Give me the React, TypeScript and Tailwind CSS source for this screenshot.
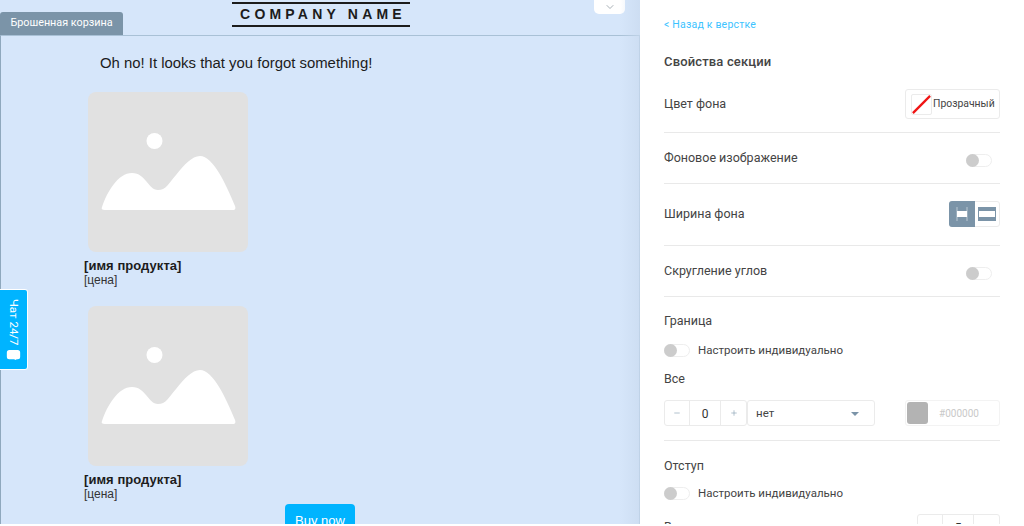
import { ChevronDown, Minus, Plus } from "lucide-react";

function Placeholder() {
  return (
    <div className="ml-1 flex h-40 w-40 rounded-lg bg-[#e1e1e1]">
      <svg viewBox="0 0 160 160" className="h-40 w-40">
        <circle cx="66.5" cy="49" r="8" fill="#fff" />
        <path
          d="M14 115C19 100 30 81 44 81C58 81 60 98 70 98C78 98 80 92 88 83C96 73 104 64 112 64C125 64 138 92 147 114C148 117 147 118 145 118L17 118C14 118 13 117 14 115Z"
          fill="#fff"
        />
      </svg>
    </div>
  );
}

function Product() {
  return (
    <div>
      <Placeholder />
      <p className="mt-[6px] text-[13px] leading-[15px] font-bold tracking-[0.05px] text-[#1c1c1c]">[имя продукта]</p>
      <p className="text-[12px] leading-[14px] text-[#333]">[цена]</p>
    </div>
  );
}

function Toggle() {
  return (
    <div className="flex h-[13px] w-[26px] items-center rounded-full border border-[#eeeeee] bg-white">
      <div className="-ml-px h-[13px] w-[13px] rounded-full bg-[#cccccc]" />
    </div>
  );
}

function Divider() {
  return <div className="h-px shrink-0 bg-[#e9e9e9]" />;
}

function Stepper({ value }: { value: string }) {
  return (
    <div className="flex h-[26px] w-[83px] shrink-0 items-stretch rounded-[3px] border border-[#ebebeb] text-[12px] text-[#333]">
      <div className="flex w-[25px] items-center justify-center border-r border-[#ebebeb]">
        <Minus className="h-2 w-2 text-[#8da3b5]" />
      </div>
      <div className="flex flex-1 items-center justify-center pt-px">{value}</div>
      <div className="flex w-[26px] items-center justify-center border-l border-[#ebebeb]">
        <Plus className="h-2 w-2 text-[#8da3b5]" />
      </div>
    </div>
  );
}

function Individual({ className }: { className: string }) {
  return (
    <div className={`flex h-[16px] shrink-0 items-center gap-[8px] text-[11.5px] text-[#444] ${className}`}>
      <Toggle />
      <span className="pt-px">Настроить индивидуально</span>
    </div>
  );
}

export default function App() {
  return (
    <div className="flex h-[526px] w-[1024px] flex-col overflow-hidden bg-white font-['Roboto',sans-serif]">
      <div className="relative flex h-[524px] overflow-hidden">
        {/* Canvas */}
        <div className="relative flex h-full w-[640px] flex-col bg-[#d6e6fa] font-['Liberation_Sans',sans-serif]">
          <div className="flex h-[35px] shrink-0 items-start">
            <div className="mt-3 flex h-[23px] w-[123px] items-center justify-center rounded-t-[3px] bg-[#7b94a8] font-['Roboto',sans-serif] text-[10.8px] text-white">
              Брошенная корзина
            </div>
            <div className="mt-[2px] ml-[109px] flex h-[25px] w-[178px] items-center justify-center border-y-2 border-[#1c1c1c] pl-1 text-[14px] font-bold tracking-[4.2px] text-[#1c1c1c]">
              COMPANY NAME
            </div>
            <div className="ml-[184px] flex h-[14px] w-[31px] items-center justify-center rounded-b-[5px] bg-white">
              <ChevronDown className="h-3 w-3 text-[#8a949c]" strokeWidth={1.5} />
            </div>
          </div>
          <div className="min-h-0 flex-1 border-x border-t border-[#a9c1d6] border-l-[#8fa8bd] pl-[83px]">
            <p className="mt-[17px] ml-[16px] text-[14.9px] leading-[20px] text-[#1c1c1c]">
              Oh no! It looks that you forgot something!
            </p>
            <div className="mt-[19px] flex flex-col gap-[19px]">
              <Product />
              <Product />
            </div>
            <div className="mt-[3px] ml-[201px] flex h-9 w-[70px] items-start justify-center rounded-t-[4px] bg-[#00b4ff] pt-[7px] text-[13px] text-white">
              Buy now
            </div>
          </div>

          {/* panel shadow falling on the canvas */}
          <div className="pointer-events-none absolute top-0 right-0 bottom-0 w-5 bg-gradient-to-r from-transparent to-[#c9daef]/70" />

          {/* Chat tab */}
          <div className="absolute top-[289px] left-0 flex h-[81px] w-[28px] flex-col items-center justify-between rounded-r-[3px] border border-l-0 border-white bg-[#00b4ff] pt-[9px] pb-[9px] text-white">
            <span className="font-['Roboto',sans-serif] text-[11.5px] leading-none [writing-mode:vertical-rl]">Чат 24/7</span>
            <svg viewBox="0 0 16 12" className="h-[10px] w-[15px]">
              <path d="M3 0h10a3 3 0 0 1 3 3v5a3 3 0 0 1-3 3h-1l-2 1-1-1H3a3 3 0 0 1-3-3V3a3 3 0 0 1 3-3z" fill="#fff" />
            </svg>
          </div>
        </div>

        {/* Properties */}
        <div className="flex w-[384px] flex-col px-6 text-[12.5px] text-[#444]">
          <a className="mt-[18px] shrink-0 text-[10.5px] leading-[13px] tracking-[0.2px] text-[#3cc3ff]">&lt; Назад к верстке</a>
          <h2 className="mt-[23px] shrink-0 text-[13px] leading-[16px] font-medium tracking-[0.15px] text-[#444]">Свойства секции</h2>

          <div className="mt-[19px] flex h-[30px] shrink-0 items-center justify-between">
            <span>Цвет фона</span>
            <div className="flex h-[30px] w-[95px] items-center gap-[1px] rounded-[3px] border border-[#ebebeb] pl-[5px] text-[10.4px]">
              <svg viewBox="0 0 21 21" className="h-[21px] w-[21px] shrink-0 rounded-[2px] border border-[#ebebeb]">
                <line x1="1" y1="20" x2="20" y2="1" stroke="#f01414" strokeWidth="2.5" />
              </svg>
              <span>Прозрачный</span>
            </div>
          </div>
          <div className="mt-[13px]"><Divider /></div>

          <div className="flex h-[50px] shrink-0 items-center justify-between">
            <span>Фоновое изображение</span>
            <div className="mt-[4px] mr-[8px]"><Toggle /></div>
          </div>
          <Divider />

          <div className="mt-[17px] flex h-[26px] shrink-0 items-center justify-between">
            <span>Ширина фона</span>
            <div className="flex h-[26px] w-[51px] rounded-[3px] border border-[#ebebeb]">
              <div className="-my-px -ml-px flex h-[26px] w-[26px] items-center justify-center rounded-l-[3px] bg-[#7b94a8]">
                <svg viewBox="0 0 18 14" className="h-[14px] w-[18px]">
                  <rect x="4" y="4" width="10" height="6" fill="#fff" />
                  <path d="M4 0v14M14 0v14" stroke="#fff" strokeWidth="0.7" opacity="0.7" />
                </svg>
              </div>
              <div className="flex flex-1 items-center justify-center">
                <svg viewBox="0 0 18 14" className="h-[14px] w-[18px]">
                  <rect width="18" height="14" fill="#7b94a8" />
                  <rect x="1" y="4" width="16" height="6" fill="#fff" />
                </svg>
              </div>
            </div>
          </div>
          <div className="mt-[18px]"><Divider /></div>

          <div className="flex h-[50px] shrink-0 items-center justify-between">
            <span>Скругление углов</span>
            <div className="mt-[4px] mr-[8px]"><Toggle /></div>
          </div>
          <Divider />

          <span className="mt-[16px] shrink-0 leading-[15px]">Граница</span>
          <Individual className="mt-[14px]" />
          <span className="mt-[13px] shrink-0 leading-[15px]">Все</span>
          <div className="mt-[14px] flex h-[26px] shrink-0 items-center">
            <Stepper value="0" />
            <div className="flex h-[26px] w-[128px] items-center justify-between rounded-[3px] border border-[#ebebeb] pt-px pr-[15px] pl-[8px] text-[11.5px]">
              <span>нет</span>
              <span className="h-0 w-0 border-x-[4px] border-t-[4px] border-x-transparent border-t-[#7b94a8]" />
            </div>
            <div className="ml-[30px] flex h-[26px] w-[95px] items-center rounded-[3px] border border-[#f3f3f3]">
              <div className="ml-[1px] h-[22px] w-[21px] rounded-[3px] bg-[#b3b3b3]" />
              <span className="ml-[11px] text-[10px] text-[#c9c9c9]">#000000</span>
            </div>
          </div>
          <div className="mt-[14px]"><Divider /></div>

          <span className="mt-[17px] shrink-0 leading-[15px]">Отступ</span>
          <Individual className="mt-[12px]" />
          <div className="mt-[13px] flex h-[26px] shrink-0 items-center justify-between">
            <span>Все</span>
            <Stepper value="5" />
          </div>
        </div>
      </div>
    </div>
  );
}
